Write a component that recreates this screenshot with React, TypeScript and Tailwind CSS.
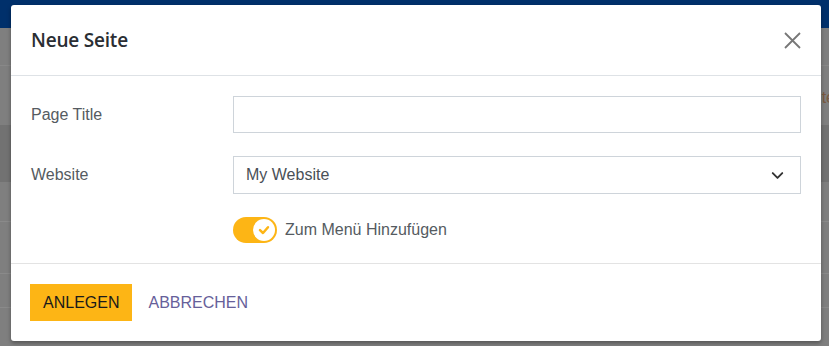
import React from 'react';
import { ChevronDown } from 'lucide-react';

const App: React.FC = () => {
  return (
    <div className="relative w-[829px] h-[346px] overflow-hidden bg-[#7f7f7f] font-['Liberation_Sans',Arial,sans-serif]">
      {/* page behind the overlay */}
      <div className="h-[28px] bg-[#00306b]" />
      <div className="h-[38px] border-b border-[#888888]" />
      <div className="h-[59px] flex items-center justify-end">
        <span className="text-[16px] text-[#7a5a40] mr-[-6px] pt-[4px]">Site</span>
      </div>
      <div className="h-[57px] bg-[#727272]" />
      <div className="h-[40px] border-b border-[#8a8a8a]" />
      <div className="h-[52px] border-b border-[#8a8a8a]" />
      <div className="h-[34px] border-b border-[#8a8a8a]" />

      {/* modal */}
      <div className="absolute left-[11px] top-[5px] w-[810px] h-[336px] bg-white rounded-[3px] shadow-[0_2px_4px_rgba(0,0,0,0.35)] flex flex-col">
        <div className="h-[71px] flex items-center justify-between px-[20px] border-b border-[#dee2e6]">
          <h2 className="text-[19px] font-semibold text-[#2a2e33] font-['Open_Sans',sans-serif] tracking-[-0.2px]">Neue Seite</h2>
          <button className="w-[18px] h-[18px] flex items-center justify-center">
            <svg width="17" height="17" viewBox="0 0 17 17" fill="none" stroke="#777777" strokeWidth="1.8">
              <path d="M1 1 L16 16 M16 1 L1 16" />
            </svg>
          </button>
        </div>

        <div className="flex flex-col px-[20px] pt-[20px] pb-[20px] gap-[23px] border-b border-[#e3e3e3]">
          <div className="flex items-center">
            <label className="w-[202px] text-[16px] text-[#555b61]">Page Title</label>
            <input className="w-[568px] h-[37px] border border-[#ced4da] px-3 text-[16px] outline-none" />
          </div>
          <div className="flex items-center">
            <label className="w-[202px] text-[16px] text-[#555b61]">Website</label>
            <div className="w-[568px] h-[38px] border border-[#ced4da] pl-[12px] pr-[13px] flex items-center justify-between text-[16px] text-[#495057]">
              <span>My Website</span>
              <ChevronDown className="w-[19px] h-[19px] text-[#333333]" strokeWidth={2.4} />
            </div>
          </div>
          <div className="flex items-center pl-[202px] gap-[8px]">
            <div className="w-[44px] h-[26px] rounded-full bg-[#fdb515] flex items-center justify-end pr-[2px]">
              <div className="w-[22px] h-[22px] rounded-full bg-white flex items-center justify-center">
                <svg width="12" height="12" viewBox="0 0 12 12" fill="none" stroke="#fdb515" strokeWidth="2.5" strokeLinecap="round" strokeLinejoin="round">
                  <path d="M2 6.2 L5 9 L10 3.2" />
                </svg>
              </div>
            </div>
            <span className="text-[16px] text-[#555b61]">Zum Menü Hinzufügen</span>
          </div>
        </div>

        <div className="flex items-center px-[19px] pt-[20px] gap-[16px]">
          <button className="h-[37px] px-[13px] bg-[#fdb515] text-[16px] text-[#1a1a1a]">ANLEGEN</button>
          <button className="h-[37px] text-[16px] text-[#66609a]">ABBRECHEN</button>
        </div>
      </div>
    </div>
  );
};

export default App;
